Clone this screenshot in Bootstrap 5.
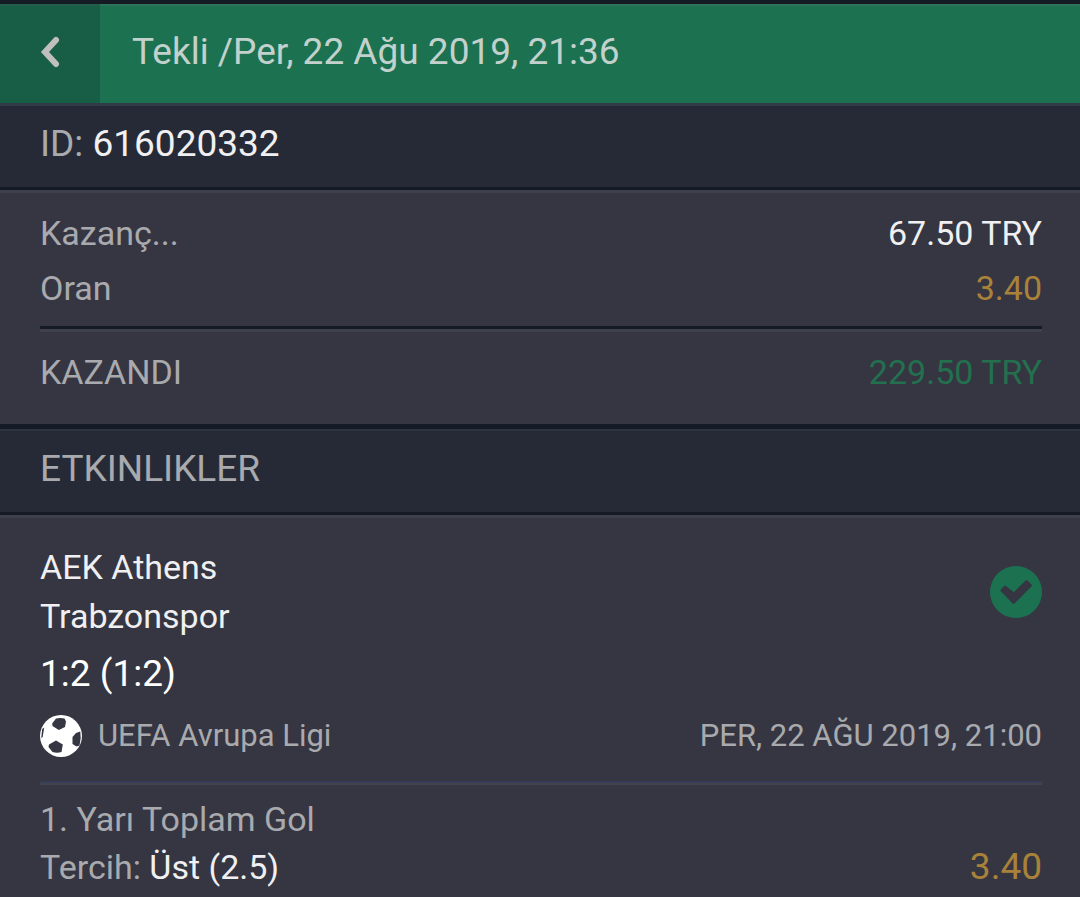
<!DOCTYPE html>
<html lang="tr">
<head>
<meta charset="utf-8">
<meta name="viewport" content="width=device-width, initial-scale=1">
<title>Kupon 616020332</title>
<link href="https://cdn.jsdelivr.net/npm/bootstrap@5.3.0/dist/css/bootstrap.min.css" rel="stylesheet">
<style>
:root {
  --panel: #353642;
  --bar: #262a36;
  --edge: #151b24;
  --shine: #3e404c;
  --muted-text: #a9aaae;
  --bright: #f0f0f2;
  --green: #1c7250;
  --gold: #a98239;
}
body {
  background: var(--panel);
  color: var(--muted-text);
  font-family: Roboto, "Noto Sans", sans-serif;
  font-size: 34px;
  line-height: 48px;
}
.text-lg { font-size: 37px; }
.text-sm { font-size: 31px; }
.bright { color: var(--bright); }
.pure { color: #fff; }
.gold { color: var(--gold); }
.green { color: #23704f; }
.topbar {
  background: var(--green);
  border-top: 4px solid var(--edge);
  border-bottom: 3px solid #2f3b46;
  box-shadow: inset 0 2px #2d7259;
}
.back-btn {
  width: 100px;
  height: 99px;
  padding: 0 0 4px;
  background: rgba(20, 64, 54, .4);
  border: 0;
  border-radius: 0;
}
.topbar h1 { color: #c3d1cd; padding-bottom: 4px; line-height: 48px; }
.section-bar {
  background: var(--bar);
  border-bottom: 3px solid var(--edge);
  padding: 14px 38px 19px 40px;
}
.section-bar h2 { line-height: 48px; }
.panel {
  background: var(--panel);
  border-top: 3px solid var(--shine);
  padding: 0 38px 0 40px;
}
.summary { padding-top: 13px; padding-bottom: 24px; border-bottom: 5px solid var(--edge); }
.summary dt, .summary dd { line-height: 55px; }
.events { border-top: 2px solid #2e3340; }
.rule-dark { border-top: 3px solid var(--edge); border-bottom: 3px solid var(--shine); margin: 10px 0 13px; }
.rule-soft { border-top: 2px solid #343c57; border-bottom: 2px solid #42434c; margin: 21px 0 10px; }
.match { padding-top: 25px; }
.teams { line-height: 49px; }
.score { padding-top: 9px; line-height: 48px; }
.league { padding-top: 14px; }
</style>
</head>
<body>
<header class="topbar d-flex align-items-center">
  <button type="button" class="back-btn btn d-flex align-items-center justify-content-center flex-shrink-0" aria-label="Geri">
    <svg width="20" height="32" viewBox="0 0 20 32" fill="none" stroke="#bfc0bd" stroke-width="6" stroke-linecap="round" stroke-linejoin="miter"><path d="M16 4 5 16 16 28"/></svg>
  </button>
  <h1 class="text-lg fw-normal mb-0 ms-2 ps-4">Tekli /Per, 22 Ağu 2019, 21:36</h1>
</header>
<main>
  <section class="section-bar">
    <p class="text-lg mb-0">ID: <span class="bright">616020332</span></p>
  </section>
  <section class="panel summary">
    <dl class="mb-0">
      <div class="d-flex justify-content-between">
        <dt class="fw-normal">Kazanç...</dt><dd class="bright mb-0">67.50 TRY</dd>
      </div>
      <div class="d-flex justify-content-between">
        <dt class="fw-normal">Oran</dt><dd class="gold mb-0">3.40</dd>
      </div>
      <div class="rule-dark"></div>
      <div class="d-flex justify-content-between">
        <dt class="fw-normal">KAZANDI</dt><dd class="green mb-0">229.50 TRY</dd>
      </div>
    </dl>
  </section>
  <section class="section-bar events">
    <h2 class="text-lg fw-normal mb-0">ETKINLIKLER</h2>
  </section>
  <article class="panel match">
    <div class="d-flex justify-content-between align-items-center">
      <div class="teams bright">
        <div>AEK Athens</div>
        <div>Trabzonspor</div>
      </div>
      <svg width="52" height="52" viewBox="0 0 52 52" role="img" aria-label="Kazandı"><circle cx="26" cy="26" r="26" fill="#1c7250"/><path d="M15 20.500 24 27.500 36.500 15 41 19.500 23.500 37 11.500 24.500Z" fill="#353642" stroke="#353642" stroke-width="2" stroke-linejoin="round"/></svg>
    </div>
    <div class="score text-lg pure">1:2 (1:2)</div>
    <div class="league text-sm d-flex justify-content-between align-items-center">
      <div class="d-flex align-items-center">
        <svg class="me-3 flex-shrink-0" width="42" height="42" viewBox="0 0 42 42" aria-hidden="true"><circle cx="21" cy="21" r="21" fill="#fff"/><g fill="#353642"><path d="M12.200 8.500 16 3.500Q20 2.500 24.500 3.500L26 6.500 25 12 18.800 15 12.500 11Z"/><path d="M9 29.500 16 25.500 22.800 29.500 21.500 37Q17 38.500 12.500 37L8.500 32Z"/><path d="M32.500 22 36 18 40.300 16.500Q41.500 23 39.500 30.500L36.500 31.500 32.500 29Z"/><path d="M2.200 14 4.200 12.500 2.700 22 1.200 23Z"/></g></svg>
        <span>UEFA Avrupa Ligi</span>
      </div>
      <time datetime="2019-08-22T21:00">PER, 22 AĞU 2019, 21:00</time>
    </div>
    <div class="rule-soft"></div>
    <div>1. Yarı Toplam Gol</div>
    <div class="d-flex justify-content-between">
      <div>Tercih: <span class="bright">Üst (2.5)</span></div>
      <div class="text-lg gold">3.40</div>
    </div>
  </article>
</main>
<script src="https://cdn.jsdelivr.net/npm/bootstrap@5.3.0/dist/js/bootstrap.bundle.min.js"></script>
</body>
</html>
